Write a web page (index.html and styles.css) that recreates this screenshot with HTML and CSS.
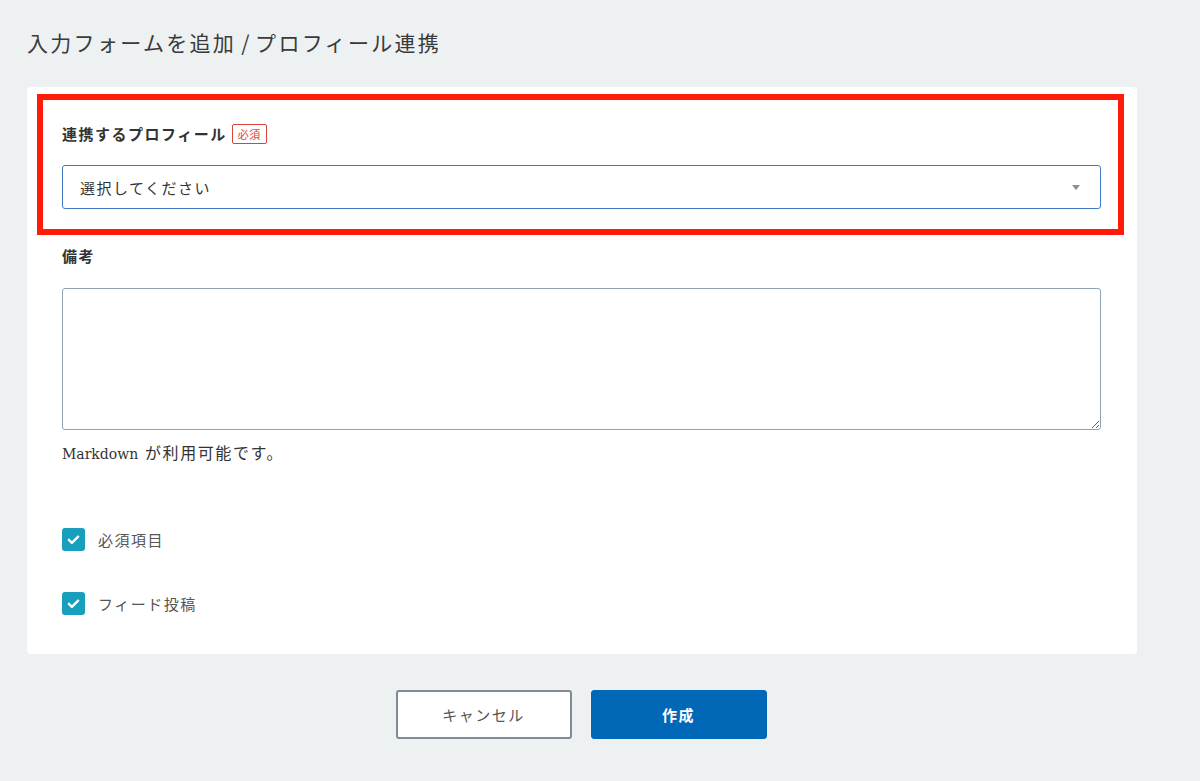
FILE: index.html
```html
<!DOCTYPE html>
<html lang="ja">
<head>
<meta charset="utf-8">
<title>入力フォームを追加 / プロフィール連携</title>
<link rel="stylesheet" href="styles.css">
</head>
<body>
<div class="page">
  <h1 class="title">入力フォームを追加<span class="slash"> / </span>プロフィール連携</h1>
  <div class="card">
    <div class="field field-profile">
      <div class="highlight"></div>
      <div class="label-row">
        <span class="label">連携するプロフィール</span>
        <span class="badge">必須</span>
      </div>
      <div class="select">
        <span class="select-text">選択してください</span>
        <span class="select-arrow"></span>
      </div>
    </div>

    <div class="field field-note">
      <div class="label-row">
        <span class="label">備考</span>
      </div>
      <textarea class="textarea"></textarea>
      <p class="help"><span class="help-latin">Markdown</span> が利用可能です。</p>
    </div>

    <div class="checks">
      <label class="check">
        <span class="box"><svg viewBox="0 0 24 24" width="17" height="17"><path d="M5.5 12.5l4.2 4.2L18.5 8" fill="none" stroke="#fff" stroke-width="3.4" stroke-linecap="round" stroke-linejoin="round"/></svg></span>
        <span class="check-label">必須項目</span>
      </label>
      <label class="check">
        <span class="box"><svg viewBox="0 0 24 24" width="17" height="17"><path d="M5.5 12.5l4.2 4.2L18.5 8" fill="none" stroke="#fff" stroke-width="3.4" stroke-linecap="round" stroke-linejoin="round"/></svg></span>
        <span class="check-label">フィード投稿</span>
      </label>
    </div>
  </div>

  <div class="actions">
    <button class="btn btn-cancel">キャンセル</button>
    <button class="btn btn-primary">作成</button>
  </div>
</div>
</body>
</html>
```

FILE: styles.css
```css
* { box-sizing: border-box; }

html, body {
  margin: 0;
  padding: 0;
  background: #edf1f2;
}

body {
  font-family: "Noto Sans CJK JP", "Noto Sans", sans-serif;
  color: #333;
  width: 1200px;
  height: 781px;
  overflow: hidden;
}

.page {
  padding: 0 63px 0 27px;
}

.title {
  margin: 0;
  padding-top: 28px;
  font-size: 21px;
  line-height: 28px;
  font-weight: 400;
  letter-spacing: 0.11em;
  color: #3a3a3a;
  height: 87px;
}

.slash {
  letter-spacing: 0.02em;
}

.card {
  background: #fff;
  border-radius: 4px;
  padding: 37px 36px 39px 35px;
}

.field {
  position: relative;
}

.highlight {
  position: absolute;
  left: -25px;
  top: -30px;
  right: -23px;
  bottom: -26px;
  border: 6px solid #ff1a0a;
  pointer-events: none;
}

.label-row {
  display: flex;
  align-items: center;
  height: 20px;
  gap: 5px;
}

.label {
  font-size: 15px;
  line-height: 20px;
  font-weight: 700;
  letter-spacing: 0.1em;
  color: #333;
}

.badge {
  display: inline-flex;
  align-items: center;
  justify-content: center;
  height: 20px;
  padding: 0 5px;
  border: 1px solid #d9433b;
  border-radius: 2px;
  color: #d9433b;
  font-size: 11px;
  letter-spacing: 0.05em;
}

.select {
  margin-top: 21px;
  height: 44px;
  border: 1px solid #3c7cc6;
  border-radius: 3px;
  display: flex;
  align-items: center;
  justify-content: space-between;
  padding: 0 20px 0 17px;
}

.select-text {
  font-size: 15px;
  letter-spacing: 0.1em;
  color: #333;
}

.select-arrow {
  width: 0;
  height: 0;
  border-left: 4px solid transparent;
  border-right: 4px solid transparent;
  border-top: 5px solid #8a8f94;
}

.field-note {
  margin-top: 37px;
}

.textarea {
  display: block;
  width: 100%;
  height: 142px;
  margin: 22px 0 0;
  border: 1px solid #8ea3b3;
  border-radius: 3px;
  resize: vertical;
  font-family: inherit;
  font-size: 15px;
  padding: 8px;
}

.help {
  margin: 13px 0 0;
  font-family: "DejaVu Serif", "Noto Sans CJK JP", serif;
  font-size: 16px;
  line-height: 22px;
  letter-spacing: 0.1em;
  color: #333;
}

.help-latin {
  font-size: 14px;
  letter-spacing: 0;
}

.checks {
  margin-top: 63px;
  display: flex;
  flex-direction: column;
  gap: 41px;
}

.check {
  display: flex;
  align-items: center;
  gap: 13px;
  height: 23px;
}

.box {
  width: 23px;
  height: 23px;
  border-radius: 3px;
  background: #17a0be;
  display: flex;
  align-items: center;
  justify-content: center;
}

.box svg { display: block; }

.check-label {
  font-size: 15px;
  letter-spacing: 0.1em;
  color: #555;
}

.actions {
  display: flex;
  justify-content: center;
  gap: 19px;
  margin-top: 36px;
  padding-right: 2px;
}

.btn {
  width: 176px;
  height: 49px;
  border-radius: 3px;
  font-family: "Noto Sans CJK JP", sans-serif;
  font-size: 15px;
  letter-spacing: 0.1em;
  cursor: pointer;
}

.btn-cancel {
  background: #fff;
  border: 2px solid #7f8c97;
  color: #555;
}

.btn-primary {
  background: #0068b7;
  border: 1px solid #0068b7;
  color: #fff;
  font-weight: 700;
}
```
